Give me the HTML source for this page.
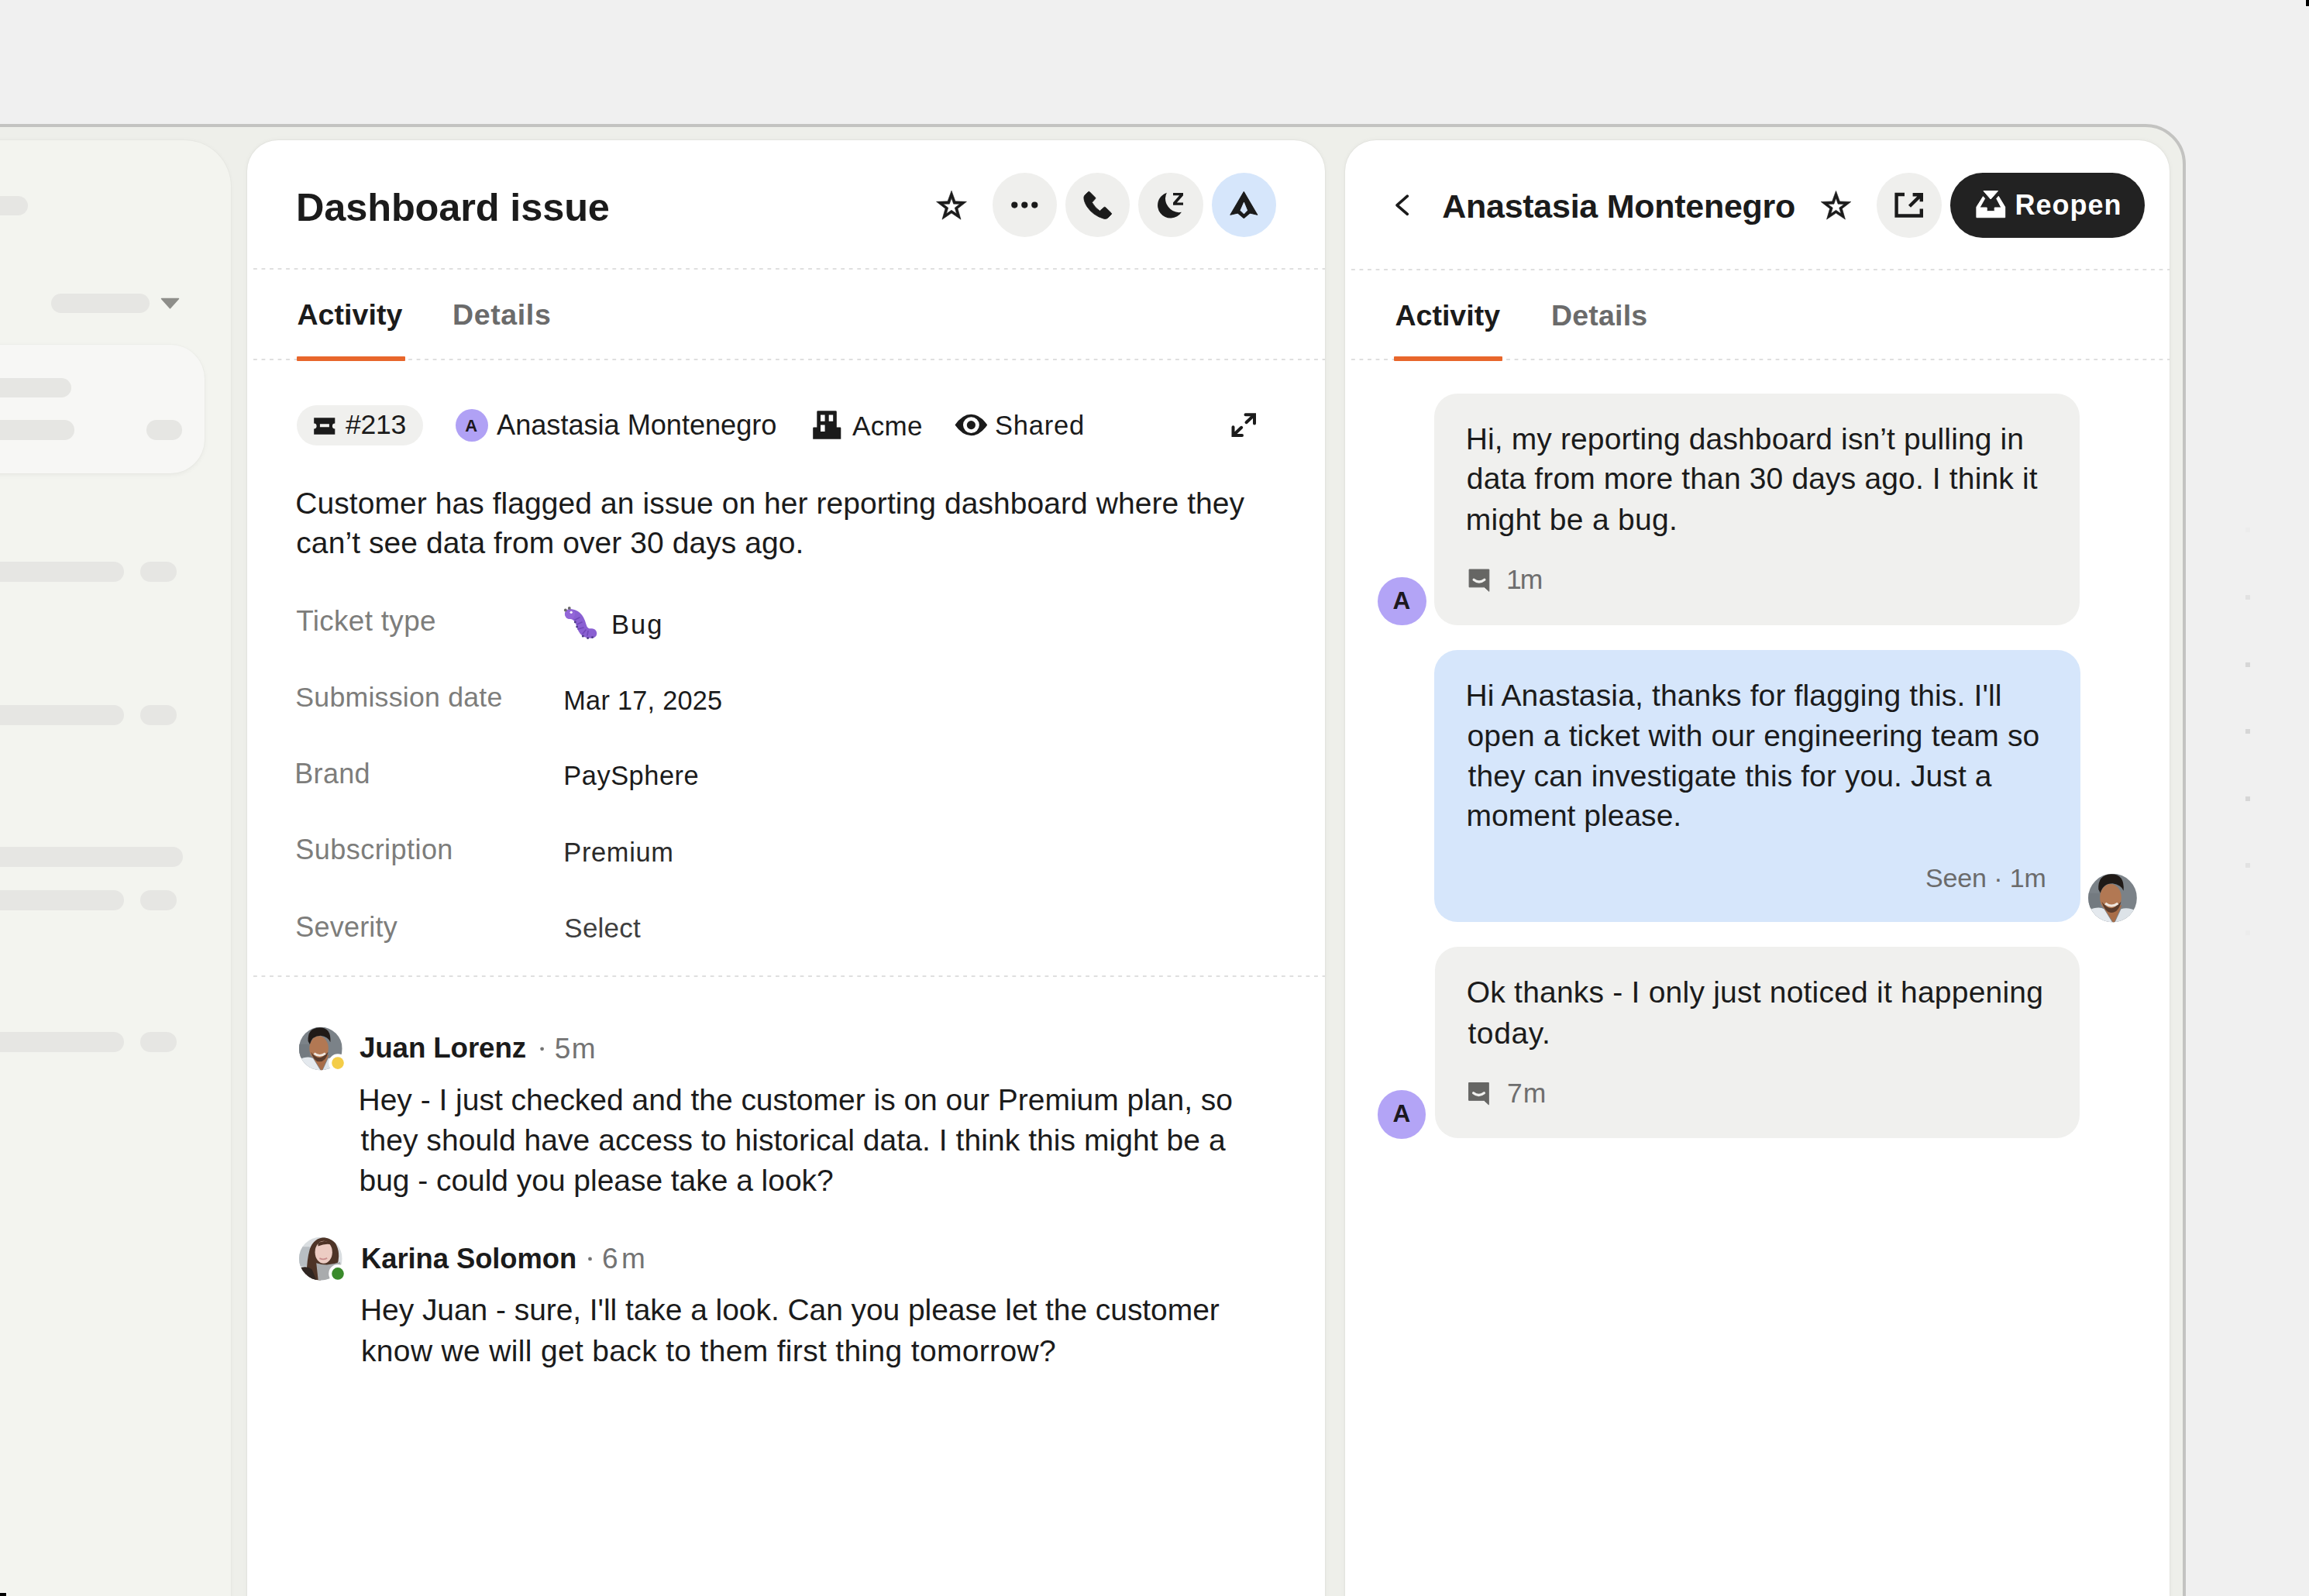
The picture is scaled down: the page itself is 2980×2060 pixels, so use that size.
<!DOCTYPE html>
<html><head><meta charset="utf-8"><title>Dashboard issue</title>
<style>
html,body{margin:0;padding:0;}
body{width:2980px;height:2060px;position:relative;overflow:hidden;background:#f0f0f0;font-family:"Liberation Sans", sans-serif;}
.t{position:absolute;white-space:nowrap;}
.b{position:absolute;}
svg.ov{position:absolute;left:0;top:0;}
</style></head><body>

<div class="b" style="left:-200.0px;top:160.0px;width:3021.0px;height:2140.0px;box-sizing:border-box;border:4px solid #c3c3c1;border-radius:0 52px 0 0;background:#eeefea;"></div>
<div class="b" style="left:-200.0px;top:181.0px;width:498.0px;height:2119.0px;background:#f3f4ef;border-radius:0 60px 0 0;box-shadow:0 0 0 1px rgba(0,0,0,0.02),0 0 6px rgba(0,0,0,0.035);"></div>
<div class="b" style="left:-30.0px;top:253.0px;width:66.0px;height:25.0px;background:#e6e6e3;border-radius:12.5px;"></div>
<div class="b" style="left:66.0px;top:378.6px;width:127.0px;height:25.0px;background:#e6e6e3;border-radius:12.5px;"></div>
<svg class="ov" width="2980" height="2060" style="position:absolute;left:0;top:0;"><path d="M208.5 385.5 L230.5 385.5 L219.5 397.8 Z" fill="#8e8e8a" stroke="#8e8e8a" stroke-width="1.5" stroke-linejoin="round"/></svg>
<div class="b" style="left:-60.0px;top:445.0px;width:324.0px;height:166.0px;background:#f7f7f5;border-radius:0 44px 44px 0;box-shadow:0 2px 6px rgba(0,0,0,0.05),0 0 0 1px rgba(0,0,0,0.015);"></div>
<div class="b" style="left:-30.0px;top:488.0px;width:122.0px;height:25.0px;background:#e6e6e3;border-radius:12.5px;"></div>
<div class="b" style="left:-30.0px;top:542.0px;width:126.0px;height:25.5px;background:#e6e6e3;border-radius:12.8px;"></div>
<div class="b" style="left:189.0px;top:542.0px;width:46.0px;height:25.5px;background:#e6e6e3;border-radius:12.8px;"></div>
<div class="b" style="left:-30.0px;top:725.0px;width:190.0px;height:26.0px;background:#e6e6e3;border-radius:13.0px;"></div>
<div class="b" style="left:180.5px;top:725.0px;width:47.5px;height:26.0px;background:#e6e6e3;border-radius:13.0px;"></div>
<div class="b" style="left:-30.0px;top:910.0px;width:190.0px;height:26.0px;background:#e6e6e3;border-radius:13.0px;"></div>
<div class="b" style="left:180.5px;top:910.0px;width:47.5px;height:26.0px;background:#e6e6e3;border-radius:13.0px;"></div>
<div class="b" style="left:-30.0px;top:1149.0px;width:190.0px;height:26.0px;background:#e6e6e3;border-radius:13.0px;"></div>
<div class="b" style="left:180.5px;top:1149.0px;width:47.5px;height:26.0px;background:#e6e6e3;border-radius:13.0px;"></div>
<div class="b" style="left:-30.0px;top:1332.0px;width:190.0px;height:26.0px;background:#e6e6e3;border-radius:13.0px;"></div>
<div class="b" style="left:180.5px;top:1332.0px;width:47.5px;height:26.0px;background:#e6e6e3;border-radius:13.0px;"></div>
<div class="b" style="left:-30.0px;top:1093.0px;width:265.7px;height:26.0px;background:#e6e6e3;border-radius:13.0px;"></div>
<div class="b" style="left:319.0px;top:181.0px;width:1391.0px;height:2119.0px;background:#ffffff;border-radius:40px 40px 0 0;box-shadow:0 0 0 1px rgba(0,0,0,0.025),0 0 6px rgba(0,0,0,0.05);"></div>
<div class="t" style="left:382.00px;top:243.05px;font-size:50.5px;line-height:50.5px;color:#1b1b1b;font-weight:700;letter-spacing:-0.143px;">Dashboard issue</div>
<div class="b" style="left:1280.7px;top:222.8px;width:83.6px;height:83.6px;background:#efefed;border-radius:50%;"></div>
<div class="b" style="left:1374.7px;top:222.8px;width:83.6px;height:83.6px;background:#efefed;border-radius:50%;"></div>
<div class="b" style="left:1469.4px;top:222.8px;width:83.6px;height:83.6px;background:#efefed;border-radius:50%;"></div>
<div class="b" style="left:1563.7px;top:222.8px;width:83.6px;height:83.6px;background:#d6e6fb;border-radius:50%;"></div>
<div class="b" style="left:327.0px;top:346.0px;width:1383.0px;height:2.0px;background:linear-gradient(to right,#dfdfdf 0 5.2px,transparent 5.2px);background-size:10.54px 2px;background-position:0 0;background-repeat:repeat-x;"></div>
<div class="t" style="left:383.40px;top:388.06px;font-size:37.5px;line-height:37.5px;color:#1b1b1b;font-weight:700;letter-spacing:0.086px;">Activity</div>
<div class="t" style="left:584.00px;top:388.06px;font-size:37.5px;line-height:37.5px;color:#6b6b6b;font-weight:700;letter-spacing:0.633px;">Details</div>
<div class="b" style="left:327.0px;top:463.0px;width:1383.0px;height:2.0px;background:linear-gradient(to right,#dfdfdf 0 5.2px,transparent 5.2px);background-size:10.54px 2px;background-position:0 0;background-repeat:repeat-x;"></div>
<div class="b" style="left:383.0px;top:459.5px;width:140.0px;height:6.0px;background:#e8662b;border-radius:1px;"></div>
<div class="b" style="left:383.0px;top:523.0px;width:163.0px;height:52.0px;background:#f0f0ee;border-radius:26.0px;"></div>
<div class="t" style="left:446.00px;top:531.36px;font-size:35.6px;line-height:35.6px;color:#1b1b1b;font-weight:400;letter-spacing:-0.267px;">#213</div>
<div class="b" style="left:588.0px;top:528.0px;width:42.0px;height:42.0px;background:#b0a1f5;border-radius:50%;"></div>
<div class="t" style="left:600.30px;top:538.78px;font-size:22px;line-height:22px;color:#1c1820;font-weight:700;letter-spacing:0.000px;">A</div>
<div class="t" style="left:641.10px;top:530.86px;font-size:36.2px;line-height:36.2px;color:#1b1b1b;font-weight:400;letter-spacing:-0.042px;">Anastasia Montenegro</div>
<div class="t" style="left:1100.00px;top:531.87px;font-size:35px;line-height:35px;color:#1b1b1b;font-weight:400;letter-spacing:0.333px;">Acme</div>
<div class="t" style="left:1284.00px;top:532.30px;font-size:34.5px;line-height:34.5px;color:#1b1b1b;font-weight:400;letter-spacing:0.800px;">Shared</div>
<div class="t" style="left:381.30px;top:629.59px;font-size:39px;line-height:39px;color:#1b1b1b;font-weight:400;letter-spacing:0.064px;">Customer has flagged an issue on her reporting dashboard where they</div>
<div class="t" style="left:382.30px;top:681.49px;font-size:39px;line-height:39px;color:#1b1b1b;font-weight:400;letter-spacing:0.072px;">can’t see data from over 30 days ago.</div>
<div class="t" style="left:382.30px;top:784.16px;font-size:36.9px;line-height:36.9px;color:#7d7d7b;font-weight:400;letter-spacing:0.320px;">Ticket type</div>
<div class="t" style="left:381.30px;top:883.38px;font-size:35.7px;line-height:35.7px;color:#7d7d7b;font-weight:400;letter-spacing:0.229px;">Submission date</div>
<div class="t" style="left:380.30px;top:980.83px;font-size:36px;line-height:36px;color:#7d7d7b;font-weight:400;letter-spacing:0.300px;">Brand</div>
<div class="t" style="left:381.30px;top:1078.94px;font-size:36.1px;line-height:36.1px;color:#7d7d7b;font-weight:400;letter-spacing:0.418px;">Subscription</div>
<div class="t" style="left:381.30px;top:1178.63px;font-size:36px;line-height:36px;color:#7d7d7b;font-weight:400;letter-spacing:0.200px;">Severity</div>
<div class="t" style="left:789.00px;top:788.90px;font-size:34.5px;line-height:34.5px;color:#1b1b1b;font-weight:400;letter-spacing:2.000px;">Bug</div>
<div class="t" style="left:727.30px;top:887.27px;font-size:34.3px;line-height:34.3px;color:#1b1b1b;font-weight:400;letter-spacing:0.255px;">Mar 17, 2025</div>
<div class="t" style="left:727.30px;top:984.08px;font-size:34.4px;line-height:34.4px;color:#1b1b1b;font-weight:400;letter-spacing:0.525px;">PaySphere</div>
<div class="t" style="left:727.30px;top:1082.58px;font-size:34.4px;line-height:34.4px;color:#2a2a2a;font-weight:400;letter-spacing:0.667px;">Premium</div>
<div class="t" style="left:728.30px;top:1180.17px;font-size:35px;line-height:35px;color:#3f3f3f;font-weight:400;letter-spacing:0.240px;">Select</div>
<div class="b" style="left:327.0px;top:1259.0px;width:1383.0px;height:2.0px;background:linear-gradient(to right,#dfdfdf 0 5.2px,transparent 5.2px);background-size:10.54px 2px;background-position:0 0;background-repeat:repeat-x;"></div>
<div class="t" style="left:464.00px;top:1335.15px;font-size:36.8px;line-height:36.8px;color:#1b1b1b;font-weight:700;letter-spacing:-0.160px;">Juan Lorenz</div>
<div class="t" style="left:715.80px;top:1335.18px;font-size:37px;line-height:37px;color:#737373;font-weight:400;letter-spacing:1.400px;">5m</div>
<div class="t" style="left:462.50px;top:1400.09px;font-size:39px;line-height:39px;color:#1b1b1b;font-weight:400;letter-spacing:-0.013px;">Hey - I just checked and the customer is on our Premium plan, so</div>
<div class="t" style="left:465.50px;top:1451.99px;font-size:39px;line-height:39px;color:#1b1b1b;font-weight:400;letter-spacing:0.061px;">they should have access to historical data. I think this might be a</div>
<div class="t" style="left:463.50px;top:1503.79px;font-size:39px;line-height:39px;color:#1b1b1b;font-weight:400;letter-spacing:-0.041px;">bug - could you please take a look?</div>
<div class="t" style="left:466.00px;top:1606.79px;font-size:36.4px;line-height:36.4px;color:#1b1b1b;font-weight:700;letter-spacing:-0.062px;">Karina Solomon</div>
<div class="t" style="left:777.00px;top:1606.28px;font-size:37px;line-height:37px;color:#737373;font-weight:400;letter-spacing:4.400px;">6m</div>
<div class="t" style="left:465.00px;top:1671.39px;font-size:39px;line-height:39px;color:#1b1b1b;font-weight:400;letter-spacing:-0.065px;">Hey Juan - sure, I'll take a look. Can you please let the customer</div>
<div class="t" style="left:466.00px;top:1723.79px;font-size:39px;line-height:39px;color:#1b1b1b;font-weight:400;letter-spacing:0.332px;">know we will get back to them first thing tomorrow?</div>
<div class="b" style="left:1736.0px;top:181.0px;width:1064.0px;height:2119.0px;background:#ffffff;border-radius:40px 40px 0 0;box-shadow:0 0 0 1px rgba(0,0,0,0.025),0 0 6px rgba(0,0,0,0.05);"></div>
<div class="t" style="left:1861.20px;top:245.20px;font-size:43px;line-height:43px;color:#1b1b1b;font-weight:700;letter-spacing:-0.263px;">Anastasia Montenegro</div>
<div class="b" style="left:2422.0px;top:223.4px;width:83.6px;height:83.6px;background:#efefed;border-radius:50%;"></div>
<div class="b" style="left:2516.5px;top:223.3px;width:251.9px;height:83.7px;background:#222222;border-radius:41.8px;"></div>
<div class="t" style="left:2600.60px;top:247.33px;font-size:36px;line-height:36px;color:#ffffff;font-weight:700;letter-spacing:0.960px;">Reopen</div>
<div class="b" style="left:1744.0px;top:347.0px;width:1056.0px;height:2.0px;background:linear-gradient(to right,#dfdfdf 0 5.2px,transparent 5.2px);background-size:10.54px 2px;background-position:0 0;background-repeat:repeat-x;"></div>
<div class="t" style="left:1800.40px;top:388.66px;font-size:37.5px;line-height:37.5px;color:#1b1b1b;font-weight:700;letter-spacing:0.029px;">Activity</div>
<div class="t" style="left:2002.00px;top:388.66px;font-size:37.5px;line-height:37.5px;color:#6b6b6b;font-weight:700;letter-spacing:0.200px;">Details</div>
<div class="b" style="left:1744.0px;top:463.0px;width:1056.0px;height:2.0px;background:linear-gradient(to right,#dfdfdf 0 5.2px,transparent 5.2px);background-size:10.54px 2px;background-position:0 0;background-repeat:repeat-x;"></div>
<div class="b" style="left:1799.0px;top:460.0px;width:140.0px;height:6.0px;background:#e8662b;border-radius:1px;"></div>
<div class="b" style="left:1851.0px;top:507.5px;width:833.4px;height:299.5px;background:#f0f0ee;border-radius:30px;"></div>
<div class="t" style="left:1891.80px;top:546.79px;font-size:39px;line-height:39px;color:#1b1b1b;font-weight:400;letter-spacing:0.114px;">Hi, my reporting dashboard isn’t pulling in</div>
<div class="t" style="left:1892.80px;top:598.39px;font-size:39px;line-height:39px;color:#1b1b1b;font-weight:400;letter-spacing:0.148px;">data from more than 30 days ago. I think it</div>
<div class="t" style="left:1891.80px;top:650.59px;font-size:39px;line-height:39px;color:#1b1b1b;font-weight:400;letter-spacing:0.300px;">might be a bug.</div>
<div class="t" style="left:1944.00px;top:731.25px;font-size:35.5px;line-height:35.5px;color:#6e6e6e;font-weight:400;letter-spacing:-2.000px;">1m</div>
<div class="b" style="left:1778.0px;top:744.5px;width:62.5px;height:62.5px;background:#b3a4f6;border-radius:50%;"></div>
<div class="t" style="left:1797.50px;top:760.04px;font-size:31.5px;line-height:31.5px;color:#1c1820;font-weight:700;letter-spacing:0.000px;">A</div>
<div class="b" style="left:1851.0px;top:839.0px;width:833.5px;height:351.2px;background:#d6e6fb;border-radius:30px;"></div>
<div class="t" style="left:1891.50px;top:878.29px;font-size:39px;line-height:39px;color:#1b1b1b;font-weight:400;letter-spacing:0.140px;">Hi Anastasia, thanks for flagging this. I'll</div>
<div class="t" style="left:1893.50px;top:930.19px;font-size:39px;line-height:39px;color:#1b1b1b;font-weight:400;letter-spacing:0.146px;">open a ticket with our engineering team so</div>
<div class="t" style="left:1894.50px;top:981.79px;font-size:39px;line-height:39px;color:#1b1b1b;font-weight:400;letter-spacing:0.100px;">they can investigate this for you. Just a</div>
<div class="t" style="left:1892.50px;top:1032.99px;font-size:39px;line-height:39px;color:#1b1b1b;font-weight:400;letter-spacing:0.015px;">moment please.</div>
<div class="t" style="left:2485.00px;top:1115.62px;font-size:34px;line-height:34px;color:#6b6b6b;font-weight:400;letter-spacing:-0.125px;">Seen · 1m</div>
<div class="b" style="left:1851.5px;top:1221.6px;width:832.5px;height:247.8px;background:#f0f0ee;border-radius:30px;"></div>
<div class="t" style="left:1892.80px;top:1261.39px;font-size:39px;line-height:39px;color:#1b1b1b;font-weight:400;letter-spacing:0.214px;">Ok thanks - I only just noticed it happening</div>
<div class="t" style="left:1894.40px;top:1314.19px;font-size:39px;line-height:39px;color:#1b1b1b;font-weight:400;letter-spacing:0.640px;">today.</div>
<div class="t" style="left:1945.00px;top:1393.75px;font-size:35.5px;line-height:35.5px;color:#6e6e6e;font-weight:400;letter-spacing:1.000px;">7m</div>
<div class="b" style="left:1777.8px;top:1407.0px;width:62.5px;height:62.5px;background:#b3a4f6;border-radius:50%;"></div>
<div class="t" style="left:1797.50px;top:1422.44px;font-size:31.5px;line-height:31.5px;color:#1c1820;font-weight:700;letter-spacing:0.000px;">A</div>
<div class="b" style="left:2898.0px;top:680.5px;width:6.0px;height:6.0px;background:#ececec;"></div>
<div class="b" style="left:2898.0px;top:767.5px;width:6.0px;height:6.0px;background:#e2e2e2;"></div>
<div class="b" style="left:2898.0px;top:854.5px;width:6.0px;height:6.0px;background:#d6d6d6;"></div>
<div class="b" style="left:2898.0px;top:941.0px;width:6.0px;height:6.0px;background:#d6d6d6;"></div>
<div class="b" style="left:2898.0px;top:1027.5px;width:6.0px;height:6.0px;background:#d6d6d6;"></div>
<div class="b" style="left:2898.0px;top:1114.0px;width:6.0px;height:6.0px;background:#e2e2e2;"></div>
<div class="b" style="left:2898.0px;top:1201.0px;width:6.0px;height:6.0px;background:#ececec;"></div>
<div class="b" style="left:2975.0px;top:0.0px;width:5.0px;height:9.0px;background:#fff;"></div>
<div class="b" style="left:2976.0px;top:0.0px;width:4.0px;height:8.0px;background:#000;"></div>
<div class="b" style="left:0.0px;top:2055.0px;width:9.0px;height:5.0px;background:#fff;"></div>
<div class="b" style="left:0.0px;top:2056.0px;width:8.0px;height:4.0px;background:#000;"></div>
<svg class="ov" width="2980" height="2060" viewBox="0 0 2980 2060"><path d="M1228.00 246.20 L1232.94 259.85 L1247.45 260.33 L1235.99 269.25 L1240.02 283.19 L1228.00 275.05 L1215.98 283.19 L1220.01 269.25 L1208.55 260.33 L1223.06 259.85 Z M1228.00 255.60 L1230.65 263.16 L1238.65 263.34 L1232.28 268.19 L1234.58 275.86 L1228.00 271.30 L1221.42 275.86 L1223.72 268.19 L1217.35 263.34 L1225.35 263.16 Z" fill="#1b1b1b" fill-rule="evenodd" stroke="#1b1b1b" stroke-width="0.6" stroke-linejoin="round"/>
<path d="M2369.50 246.40 L2374.41 259.94 L2388.81 260.43 L2377.44 269.28 L2381.43 283.12 L2369.50 275.05 L2357.57 283.12 L2361.56 269.28 L2350.19 260.43 L2364.59 259.94 Z M2369.50 255.75 L2372.12 263.25 L2380.06 263.42 L2373.73 268.23 L2376.02 275.83 L2369.50 271.30 L2362.98 275.83 L2365.27 268.23 L2358.94 263.42 L2366.88 263.25 Z" fill="#1b1b1b" fill-rule="evenodd" stroke="#1b1b1b" stroke-width="0.6" stroke-linejoin="round"/>
<circle cx="1309.3" cy="264.6" r="4.1" fill="#1b1b1b"/>
<circle cx="1322.3" cy="264.6" r="4.1" fill="#1b1b1b"/>
<circle cx="1335.3" cy="264.6" r="4.1" fill="#1b1b1b"/>
<path d="M1404.6 247.6 Q1405.4 246.9 1406.2 247.6 L1413.6 255 Q1414.3 255.8 1413.6 256.6 L1409.4 261.3 Q1413.5 268.5 1419.45 272.3 L1424.9 267.5 Q1425.8 266.8 1426.7 267.6 L1434.2 274.9 Q1435 275.8 1434.3 276.7 L1429.6 281.4 Q1427.6 283 1424.6 282.3 Q1410.5 278.2 1402.8 266.5 Q1398.6 259.5 1398.9 254.6 Q1399.2 252.6 1400.4 251.5 Z" fill="#1b1b1b" stroke="#1b1b1b" stroke-width="0.8" stroke-linejoin="round"/>
<path d="M1505.83 248.85 A16.75 16.75 0 1 0 1524.92 273.86 A17.8 17.8 0 0 1 1505.83 248.85 Z" fill="#1b1b1b"/>
<path d="M1514 249.1 L1527 249.1 L1527 252.3 L1518.9 261.6 L1527 261.6 L1527 264.8 L1514 264.8 L1514 261.6 L1522.1 252.3 L1514 252.3 Z" fill="#1b1b1b"/>
<path d="M1605.3 247.6 L1622.7 277.3 L1613 275 L1605.3 281.5 L1597.6 275 L1587.9 277.3 Z M1605.5 258.9 L1599.8 271.7 L1605.5 277.2 L1610.8 271.7 Z" fill="#1b1b1b" fill-rule="evenodd" stroke="#1b1b1b" stroke-width="1.1" stroke-linejoin="round"/>
<path d="M405.2 539.3 L432.3 539.3 L432.3 546.6 A3.4 3.4 0 0 0 432.3 553.4 L432.3 560.7 L405.2 560.7 L405.2 553.4 A3.4 3.4 0 0 0 405.2 546.6 Z M412.9 547.2 L424.9 547.2 L424.9 551.2 L412.9 551.2 Z" fill="#1b1b1b" fill-rule="evenodd"/>
<path d="M1054.3 566.8 L1054.3 531.5 Q1054.3 530.3 1055.5 530.3 L1078.6 530.3 Q1079.8 530.3 1079.8 531.5 L1079.8 551.6 L1084.3 551.6 Q1085.3 551.6 1085.3 552.6 L1085.3 566.8 L1049.2 566.8 L1049.2 552.6 Q1049.2 551.6 1050.2 551.6 L1054.3 551.6 Z M1059 535.4 L1064.6 535.4 L1064.6 543.7 L1059 543.7 Z M1069.7 535.4 L1075.2 535.4 L1075.2 543.7 L1069.7 543.7 Z M1059 548.6 L1064.6 548.6 L1064.6 557 L1059 557 Z" fill="#1b1b1b" fill-rule="evenodd"/>
<path d="M1232.5 548.6 Q1242 534.8 1253.4 534.8 Q1264.8 534.8 1274.2 548.6 Q1264.8 562.3 1253.4 562.3 Q1242 562.3 1232.5 548.6 Z M1253.4 538.2 A10.4 10.4 0 1 0 1253.4 559 A10.4 10.4 0 1 0 1253.4 538.2 Z" fill="#1b1b1b" fill-rule="evenodd"/>
<circle cx="1253.4" cy="548.6" r="5.6" fill="#1b1b1b"/>
<path d="M1607.5 535.3 L1619 535.3 L1619 546.5 M1619 535.3 L1608.5 545.2 M1591.5 551.3 L1591.5 562 L1603 562 M1591.5 562 L1602.2 551.8" fill="none" stroke="#1b1b1b" stroke-width="4" stroke-linecap="round" stroke-linejoin="miter"/>
<path d="M735.5 792.5 C744.5 792.5 748.5 800 750.5 807.5 C752.5 815 757 818 764 817.5" fill="none" stroke="#8a60d2" stroke-width="12.5" stroke-linecap="round"/>
<circle cx="735.5" cy="792.5" r="6.6" fill="#9366d8"/>
<circle cx="737.2" cy="790.3" r="1.6" fill="#ffffff"/>
<circle cx="729.8" cy="787.5" r="1.9" fill="#6a6a6a"/><circle cx="734.8" cy="784.9" r="1.9" fill="#6a6a6a"/>
<path d="M742 800 L748 797" stroke="#7048b8" stroke-width="1.6" stroke-linecap="round"/>
<path d="M744.5 806 L751 803" stroke="#7048b8" stroke-width="1.6" stroke-linecap="round"/>
<path d="M746 812 L753 810" stroke="#7048b8" stroke-width="1.6" stroke-linecap="round"/>
<path d="M752 818 L756 813" stroke="#7048b8" stroke-width="1.6" stroke-linecap="round"/>
<path d="M758 820 L759 814.5" stroke="#7048b8" stroke-width="1.6" stroke-linecap="round"/>
<g fill="#4d3b86"><circle cx="742.3" cy="803" r="1.4"/><circle cx="744.6" cy="809" r="1.4"/><circle cx="752.3" cy="821" r="1.5"/><circle cx="758.6" cy="823.4" r="1.5"/><circle cx="764.5" cy="822.6" r="1.4"/></g>
<path d="M1896.1 735 L1921.8 735 L1921.8 763.3 L1915.8 757.8 L1896.1 757.8 Z" fill="#666664" stroke="#666664" stroke-width="1" stroke-linejoin="round"/><path d="M1902.1 748.2 Q1908.8999999999999 753.8 1915.8999999999999 748.2" fill="none" stroke="#f0f0ee" stroke-width="3.2" stroke-linecap="round"/>
<path d="M1895.6 1397.5 L1921.3 1397.5 L1921.3 1425.8 L1915.3 1420.3 L1895.6 1420.3 Z" fill="#666664" stroke="#666664" stroke-width="1" stroke-linejoin="round"/><path d="M1901.6 1410.7 Q1908.3999999999999 1416.3 1915.3999999999999 1410.7" fill="none" stroke="#f0f0ee" stroke-width="3.2" stroke-linecap="round"/>
<path d="M1816.3 253.2 L1803 264.8 L1816.3 276.3" fill="none" stroke="#1b1b1b" stroke-width="3.6" stroke-linecap="round" stroke-linejoin="round"/>
<path d="M2458 251 L2447.6 251 L2447.6 278.5 L2479.8 278.5 L2479.8 269.6" fill="none" stroke="#1b1b1b" stroke-width="4.4" stroke-linejoin="miter"/>
<path d="M2468.6 251.2 L2479.8 251.2 L2479.8 260.3 M2479.6 251.4 L2464.5 266.2" fill="none" stroke="#1b1b1b" stroke-width="4.4" stroke-linecap="butt" stroke-linejoin="miter"/>
<path d="M2550.9 280.7 L2587.7 280.7 L2587.7 267.2 L2579.3 253.3 L2576.7 256.3 L2582.9 268 L2574.2 268 L2574.2 272.7 L2564.2 272.7 L2564.2 268 L2555 268 L2561.6 256.3 L2559.4 253.7 L2550.9 267.2 Z" fill="#ffffff" stroke="#ffffff" stroke-width="1" stroke-linejoin="round"/>
<path d="M2560 246.5 L2578.5 246.5 L2569.2 257 Z" fill="#ffffff" stroke="#ffffff" stroke-width="1" stroke-linejoin="round"/>
<clipPath id="cj1"><circle cx="0" cy="0" r="1"/></clipPath>
<g transform="translate(413.8 1353.5) scale(27.9)"><g clip-path="url(#cj1)">
<rect x="-1" y="-1" width="2" height="2" fill="#7b8288"/>
<rect x="-1" y="-0.2" width="0.5" height="0.6" fill="#737a80"/>
<path d="M-1.1 1.1 L-1.1 0.55 Q-0.6 0.3 -0.35 0.45 L0.05 1.1 Z" fill="#e4e9ee"/>
<path d="M0.35 0.45 Q0.7 0.35 1.1 0.6 L1.1 1.1 L0.05 1.1 Z" fill="#dde3e8"/>
<path d="M-0.42 0.3 L0.38 0.3 L0.05 1.05 Z" fill="#a86d48"/>
<ellipse cx="-0.08" cy="-0.02" rx="0.44" ry="0.56" fill="#b27853"/>
<path d="M-0.58 -0.35 Q-0.62 -0.95 -0.05 -0.98 Q0.5 -0.98 0.45 -0.3 Q0.35 -0.55 0.0 -0.6 Q-0.4 -0.6 -0.5 -0.2 Z" fill="#201a17"/>
<path d="M-0.45 0.15 Q-0.3 0.62 -0.05 0.6 Q0.25 0.6 0.35 0.15 Q0.1 0.42 -0.05 0.42 Q-0.25 0.42 -0.45 0.15 Z" fill="#5a3c2c"/>
<path d="M-0.3 0.22 Q-0.05 0.42 0.22 0.22" fill="none" stroke="#efe6de" stroke-width="0.1"/>
</g></g>
<clipPath id="cj2"><circle cx="0" cy="0" r="1"/></clipPath>
<g transform="translate(2726.5 1159.1) scale(31.4)"><g clip-path="url(#cj2)">
<rect x="-1" y="-1" width="2" height="2" fill="#7b8288"/>
<rect x="-1" y="-0.2" width="0.5" height="0.6" fill="#737a80"/>
<path d="M-1.1 1.1 L-1.1 0.55 Q-0.6 0.3 -0.35 0.45 L0.05 1.1 Z" fill="#e4e9ee"/>
<path d="M0.35 0.45 Q0.7 0.35 1.1 0.6 L1.1 1.1 L0.05 1.1 Z" fill="#dde3e8"/>
<path d="M-0.42 0.3 L0.38 0.3 L0.05 1.05 Z" fill="#a86d48"/>
<ellipse cx="-0.08" cy="-0.02" rx="0.44" ry="0.56" fill="#b27853"/>
<path d="M-0.58 -0.35 Q-0.62 -0.95 -0.05 -0.98 Q0.5 -0.98 0.45 -0.3 Q0.35 -0.55 0.0 -0.6 Q-0.4 -0.6 -0.5 -0.2 Z" fill="#201a17"/>
<path d="M-0.45 0.15 Q-0.3 0.62 -0.05 0.6 Q0.25 0.6 0.35 0.15 Q0.1 0.42 -0.05 0.42 Q-0.25 0.42 -0.45 0.15 Z" fill="#5a3c2c"/>
<path d="M-0.3 0.22 Q-0.05 0.42 0.22 0.22" fill="none" stroke="#efe6de" stroke-width="0.1"/>
</g></g>
<clipPath id="ck1"><circle cx="0" cy="0" r="1"/></clipPath>
<g transform="translate(413.8 1624.6) scale(27.9)"><g clip-path="url(#ck1)">
<rect x="-1" y="-1" width="2" height="2" fill="#d9dde0"/>
<rect x="-1" y="-0.55" width="0.5" height="0.9" fill="#b8bec3"/>
<path d="M-0.62 1.1 Q-0.7 0.3 -0.5 -0.45 Q-0.3 -0.98 0.2 -0.98 Q0.7 -0.95 0.82 -0.35 Q0.88 0.05 0.75 0.3 L0.35 0.3 L-0.05 1.1 Z" fill="#4e3427"/>
<ellipse cx="0.14" cy="-0.3" rx="0.4" ry="0.52" fill="#ecccc3"/>
<path d="M-0.12 -0.72 Q0.2 -0.95 0.62 -0.62 Q0.3 -0.75 -0.12 -0.58 Z" fill="#4e3427"/>
<path d="M-0.2 0.2 Q0.35 0.38 0.9 0.15 L1.1 1.1 L-0.1 1.1 Z" fill="#a9abad"/>
<path d="M-1 0.45 Q-0.65 0.3 -0.4 0.5 L-0.15 1.1 L-1 1.1 Z" fill="#2f2521"/>
<path d="M-0.05 -0.02 Q0.15 0.08 0.3 -0.03" fill="none" stroke="#c98d8d" stroke-width="0.07"/>
</g></g>
<circle cx="699.6" cy="1353.8" r="2.4" fill="#737373"/><circle cx="761.5" cy="1624.9" r="2.4" fill="#737373"/>
<circle cx="436" cy="1372.1" r="11.8" fill="#ffffff"/><circle cx="436" cy="1372.1" r="7.8" fill="#f4cd48"/>
<circle cx="436" cy="1643.9" r="11.8" fill="#ffffff"/><circle cx="436" cy="1643.9" r="7.8" fill="#3a8a2b"/></svg>
</body></html>
